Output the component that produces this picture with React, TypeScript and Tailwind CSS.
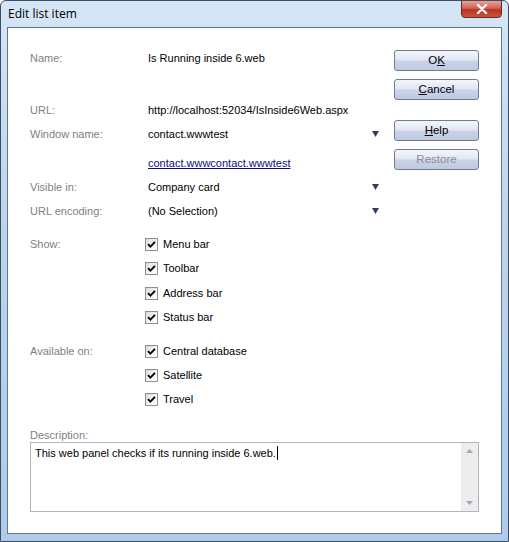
import React from 'react'

const FONT = "font-['Liberation_Sans',Arial,sans-serif]"

function DropArrow() {
  return (
    <svg width="7" height="6" viewBox="0 0 7 6" className="shrink-0">
      <polygon points="0,0 7,0 3.5,6" fill="#2f4060" />
    </svg>
  )
}

function Check() {
  return (
    <span className="flex h-[13px] w-[13px] shrink-0 items-center justify-center border border-[#8e8f8f] bg-[linear-gradient(135deg,#dcdcdc_0%,#f6f6f6_60%,#ffffff_100%)]">
      <svg width="9" height="9" viewBox="0 0 9 9">
        <path d="M1 4.2 L3.4 6.6 L8 1.8" fill="none" stroke="#000" strokeWidth="1.9" />
      </svg>
    </span>
  )
}

function Row({
  label,
  children,
  arrow,
}: {
  label?: string
  children?: React.ReactNode
  arrow?: boolean
}) {
  return (
    <div className="flex h-6 items-center">
      <div className="w-[118px] shrink-0 text-[#7f7f7f]">{label}</div>
      <div className="flex flex-1 items-center">{children}</div>
      {arrow && (
        <div className="pr-[3px]">
          <DropArrow />
        </div>
      )}
    </div>
  )
}

function CheckRow({ label, text }: { label?: string; text: string }) {
  return (
    <Row label={label}>
      <div className="-ml-[3px] flex items-center gap-[5px]">
        <Check />
        <span>{text}</span>
      </div>
    </Row>
  )
}

function Button({ children, disabled }: { children: React.ReactNode; disabled?: boolean }) {
  return (
    <button
      type="button"
      className={`h-[21px] w-[85px] rounded-[3px] border border-[#707b8c] bg-[linear-gradient(180deg,#f4f6fb_0%,#e2e7f3_45%,#c9d2e7_55%,#bfc9e1_100%)] text-[11.5px] leading-none ${
        disabled ? 'text-[#8d8d8d]' : 'text-black'
      }`}
    >
      {children}
    </button>
  )
}

export default function App() {
  return (
    <div
      className={`flex h-[542px] w-[509px] flex-col overflow-hidden rounded-t-[6px] border border-[#3c4d62] bg-[linear-gradient(180deg,#d5e6f6_0%,#bcd5ee_40%,#aecbe9_100%)] ${FONT}`}
    >
      {/* Title bar */}
      <div className="relative flex h-[26px] shrink-0 items-center pl-[7px]">
        <span className="font-['Open_Sans',sans-serif] text-[12px] text-black">Edit list item</span>
        <div className="absolute right-[6px] top-[-1px] flex h-[18px] w-[41px] items-center justify-center rounded-b-[4px] border border-[#6a2a24] bg-[linear-gradient(180deg,#e7a397_0%,#d2624f_45%,#b8321f_55%,#c9553f_100%)]">
          <svg width="12" height="10" viewBox="0 0 12 10">
            <path d="M2 1 L10 9 M10 1 L2 9" stroke="#fff" strokeWidth="2.4" strokeLinecap="round" />
          </svg>
        </div>
      </div>

      {/* Client area */}
      <div className="mx-[6px] flex h-[507px] shrink-0 flex-col border border-[#62768c] bg-white pl-[22px] pr-[21px] text-[11px] text-black">
        <div className="flex gap-[12px]">
          {/* Form */}
          <div className="flex w-[352px] flex-col pt-[18px]">
            <Row label="Name:">Is Running inside 6.web</Row>
            <div className="mt-[28px]">
              <Row label="URL:">http://localhost:52034/IsInside6Web.aspx</Row>
            </div>
            <Row label="Window name:" arrow>
              contact.wwwtest
            </Row>
            <div className="mt-[5px]">
              <Row>
                <span className="text-[#0b0b86] underline">contact.wwwcontact.wwwtest</span>
              </Row>
            </div>
            <Row label="Visible in:" arrow>
              Company card
            </Row>
            <Row label="URL encoding:" arrow>
              (No Selection)
            </Row>
            <div className="mt-[9px]">
              <CheckRow label="Show:" text="Menu bar" />
              <CheckRow text="Toolbar" />
              <div className="mt-px">
                <CheckRow text="Address bar" />
              </div>
              <CheckRow text="Status bar" />
            </div>
            <div className="mt-[10px]">
              <CheckRow label="Available on:" text="Central database" />
              <CheckRow text="Satellite" />
              <CheckRow text="Travel" />
            </div>
          </div>

          {/* Buttons */}
          <div className="flex flex-col pt-[22px]">
            <Button>
              O<span className="underline">K</span>
            </Button>
            <div className="mt-[8px]">
              <Button>
                <span className="underline">C</span>ancel
              </Button>
            </div>
            <div className="mt-[20px]">
              <Button>
                <span className="underline">H</span>elp
              </Button>
            </div>
            <div className="mt-[8px]">
              <Button disabled>Restore</Button>
            </div>
          </div>
        </div>

        {/* Description */}
        <div className="mt-[17px] leading-[14px] text-[#7f7f7f]">Description:</div>
        <div className="flex h-[70px] w-[449px] border border-[#abb5c3]">
          <div className="flex-1 px-[4px] leading-[15px] text-black">
            This web panel checks if its running inside 6.web.
            <span className="ml-px inline-block h-[14px] w-px translate-y-[3px] bg-black" />
          </div>
          <div className="flex w-[17px] flex-col items-center justify-between bg-[#ededed] py-[6px]">
            <svg width="7" height="4" viewBox="0 0 7 4">
              <polygon points="0,4 7,4 3.5,0" fill="#a9a9a9" />
            </svg>
            <svg width="7" height="4" viewBox="0 0 7 4">
              <polygon points="0,0 7,0 3.5,4" fill="#a9a9a9" />
            </svg>
          </div>
        </div>
      </div>
    </div>
  )
}
